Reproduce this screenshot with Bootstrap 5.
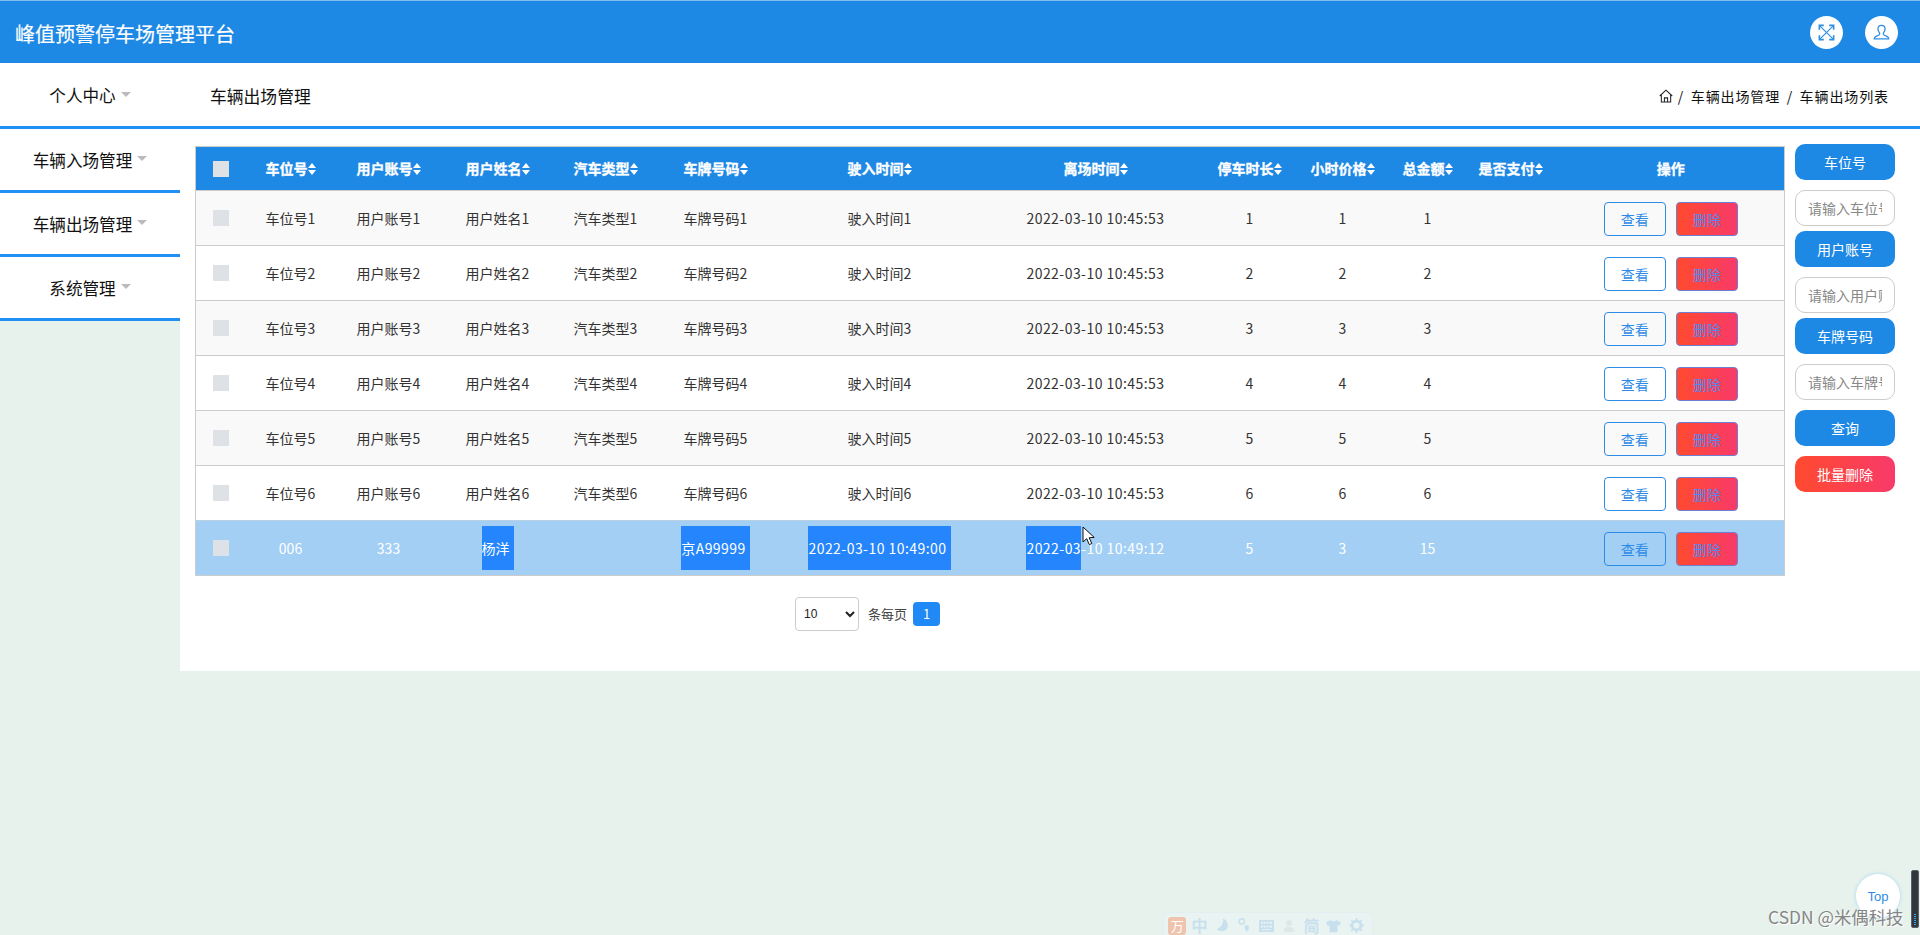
<!DOCTYPE html>
<html lang="zh-CN">
<head>
<meta charset="utf-8">
<title>峰值预警停车场管理平台</title>
<link href="https://cdn.jsdelivr.net/npm/bootstrap@5.3.0/dist/css/bootstrap.min.css" rel="stylesheet">
<style>
html,body{height:935px;overflow:hidden}
body{background:#e8f2ed;font-family:"Noto Sans CJK SC","Liberation Sans",sans-serif;font-size:14px;color:#333;position:relative}
.topbar{height:63px;background:#1e88e5;border-top:1px solid #7fbcf0;padding:0 22px 0 15px}
.brand-name{font-size:20px;color:#fff;line-height:1;padding-top:3px;-webkit-text-stroke:.2px #fff}
.round-ico{width:33px;height:33px;border-radius:50%;background:#fff;color:#2f8fe3}
.subbar{height:66px;background:#fff;border-bottom:3px solid #2190f5;padding-top:3px}
.menu-slot{width:180px}
.menu-text{font-size:16.6px;color:#111;line-height:1}
.menu-caret{display:inline-block;border:5px solid transparent;border-top:5px solid #bbb;border-bottom:0;margin-left:5px;vertical-align:5px}
.page-title{font-size:16.8px;color:#111;padding-left:30px;line-height:1}
.crumbs{font-size:14px;letter-spacing:.9px;word-spacing:2.500px;color:#111;padding-right:31px;white-space:pre}
.layout{align-items:flex-start}
.sideitem{height:64px;width:180px;background:#fff;border-bottom:3px solid #2190f5;padding-top:2px}
.sideitem .menu-caret{margin-bottom:5px;vertical-align:baseline}
.panel{background:#fff;height:542px;padding:17px 0 0 15px;gap:11px}
.grid-wrap{width:1589px}
.data-grid{table-layout:fixed;width:1589px;margin:0;border-collapse:collapse;border:1px solid #ccc;--bs-table-bg:transparent}
.data-grid th{height:44px;background:#1e88e5;color:#fff;font-size:14px;font-weight:700;text-align:center;vertical-align:middle;padding:0;border:0;white-space:nowrap;-webkit-text-stroke:.3px #fff}
.data-grid td{height:55px;text-align:center;vertical-align:middle;padding:0;border:0;border-top:1px solid #ccc;color:#333;white-space:nowrap;line-height:44px}
.data-grid tr.alt td{background:#f9f9f9}
.data-grid tr.plain td{background:#fff}
.data-grid tr.picked td{background:#a3cff5;color:#fff;border-top-color:#b9cfe2}
.tick{display:block;width:16px;height:16px;background:#dee2e6;margin:0 auto}
.sort-ico{width:8px;height:12px;vertical-align:-1px}
.when{letter-spacing:.46px}
.sel{display:inline-block;background:#2485fd;line-height:44px;height:44px;color:#fff;padding-right:4px}
.sel-left{display:inline-block;background:#2485fd;line-height:44px;height:44px;color:#fff}
.act-row{gap:10px;padding-top:1px}
.act{width:62px;height:34px;padding:0;font-size:14px;border-radius:4px;line-height:32px;color:#2e8be6;border:1px solid #2e8be6;background:transparent}
.act-del{background:linear-gradient(90deg,#ff4a2e,#f83a6a);color:#5488ee;border-color:#6f7fd0}
.tools{width:100px;margin-top:-2px}
.tool-btn{width:100px;height:36px;padding:0;border:0;border-radius:10px;background:#1e88e5;color:#fff;font-size:14px;line-height:36px}
.tool-del{background:linear-gradient(90deg,#ff4a2e,#f83a6a)}
.tool-input{width:100px;height:36px;border:1px solid #ccc;border-radius:10px;padding:0 12px;font-size:14px;color:#333;background:#fff;font-family:inherit}
.tool-input::placeholder{color:#888;opacity:1}
.gap-s{margin-top:5px}.gap-l{margin-top:10px}
.pager{height:34px;margin-top:21px;padding-left:600px;gap:9px}
.size-pick{width:64px;height:34px;font-size:12px;border:1px solid #ccc;border-radius:4px;padding:0 0 0 4px;background:#fff;color:#222;font-family:"Liberation Sans",sans-serif}
.pager-text{font-size:13px;color:#444}
.page-no{width:27px;height:24px;background:#2189f5;color:#fff;border-radius:4px;font-size:13px;line-height:24px;margin-left:-3px}
.up-btn{position:absolute;left:1856px;top:874px;width:44px;height:44px;border-radius:50%;background:#fff;box-shadow:0 0 4px #a9d6f2;color:#2e8be6;font-size:13px;line-height:46px;text-align:center;font-family:"Liberation Sans",sans-serif}
.mark-text{position:absolute;left:1768px;top:906px;font-size:17.4px;line-height:22px;color:#858585;text-shadow:1px 1px 0 #fff;white-space:nowrap}
.edge-strip{position:absolute;left:1911px;top:870px;width:8px;height:58px;background:#31373d;border:1px solid #5a6068;border-radius:2px}
.edge-dots{position:absolute;left:2px;bottom:2px;width:2px;height:11px;background:repeating-linear-gradient(#35a4e8 0 1px,transparent 1px 2px)}
.ime{position:absolute;left:1163px;top:912px;width:210px;height:23px;border:1px solid #e2eef0;border-bottom:0;border-radius:6px 6px 0 0;background:#e9f3f1;padding:4px 0 0 2px;color:#c7e0ee;font-size:16px;line-height:1}
.ime-cell{width:22.4px;flex:none;text-align:center;display:flex;justify-content:center;align-items:center;-webkit-text-stroke:.4px #c7e0ee}
.ime-logo{width:18px;height:18px;border-radius:3px;background:#efc4ad;color:#fff;font-size:13px;line-height:18px;-webkit-text-stroke:0}
.cursor-mark{position:absolute;left:1082px;top:526px;width:13px;height:20px}
</style>
</head>
<body>

<header class="topbar d-flex align-items-center justify-content-between">
  <div class="brand-name">峰值预警停车场管理平台</div>
  <div class="d-flex" style="gap:22px">
    <div class="round-ico d-flex align-items-center justify-content-center">
      <svg width="17" height="17" viewBox="0 0 19 19" fill="none" stroke="currentColor" stroke-width="1.300"><path d="M2 2l15 15M17 2L2 17"/><path d="M1.500 6.500v-5h5M12.500 1.500h5v5M17.500 12.500v5h-5M6.500 17.500h-5v-5" stroke-width="1.800"/></svg>
    </div>
    <div class="round-ico d-flex align-items-center justify-content-center">
      <svg width="17" height="17" viewBox="0 0 20 20" fill="none" stroke="currentColor" stroke-width="1.500"><path d="M10 1.500c2.700 0 4.200 2 4.200 4.500 0 2-1 3.600-2 4.600v1.600c0 .8 1 1.100 3 1.800 2 .7 3.300 1.600 3.300 3.500H1.500c0-1.900 1.300-2.800 3.300-3.500 2-.7 3-1 3-1.800v-1.600c-1-1-2-2.600-2-4.600 0-2.500 1.500-4.500 4.200-4.500z"/></svg>
    </div>
  </div>
</header>

<div class="subbar d-flex align-items-center">
  <div class="menu-slot text-center"><span class="menu-text">个人中心</span><span class="menu-caret"></span></div>
  <div class="page-title flex-grow-1">车辆出场管理</div>
  <div class="crumbs d-flex align-items-center">
    <svg width="14" height="14" viewBox="0 0 15 15" fill="none" stroke="#222" stroke-width="1.100" style="margin-right:5px"><path d="M.8 7.500L7.500 1.300l6.700 6.200M2.500 6.500v7.500h10V6.500"/><path d="M5.800 14V9.500h3.400V14"/></svg>
    <span>/ 车辆出场管理 / 车辆出场列表</span>
  </div>
</div>

<div class="d-flex layout">
  <nav>
    <div class="sideitem d-flex align-items-center justify-content-center"><span class="menu-text">车辆入场管理</span><span class="menu-caret"></span></div>
    <div class="sideitem d-flex align-items-center justify-content-center"><span class="menu-text">车辆出场管理</span><span class="menu-caret"></span></div>
    <div class="sideitem d-flex align-items-center justify-content-center"><span class="menu-text">系统管理</span><span class="menu-caret"></span></div>
  </nav>
  <main class="panel flex-grow-1 d-flex align-items-start">
    <div class="grid-wrap">
      <table class="table data-grid">
        <colgroup><col style="width:50px"><col style="width:90px"><col style="width:106px"><col style="width:112px"><col style="width:104px"><col style="width:116px"><col style="width:212px"><col style="width:220px"><col style="width:88px"><col style="width:98px"><col style="width:72px"><col style="width:94px"><col style="width:227px"></colgroup>
        <thead>
          <tr id="head-row"></tr>
        </thead>
        <tbody id="rows"></tbody>
      </table>
      <div class="pager d-flex align-items-center">
        <select class="size-pick"><option>10</option><option>20</option><option>30</option></select>
        <span class="pager-text">条每页</span>
        <span class="page-no text-center">1</span>
      </div>
    </div>
    <aside class="tools d-flex flex-column">
      <button class="tool-btn">车位号</button>
      <input class="tool-input gap-l" placeholder="请输入车位号">
      <button class="tool-btn gap-s">用户账号</button>
      <input class="tool-input gap-l" placeholder="请输入用户账号">
      <button class="tool-btn gap-s">车牌号码</button>
      <input class="tool-input gap-l" placeholder="请输入车牌号码">
      <button class="tool-btn gap-l">查询</button>
      <button class="tool-btn tool-del gap-l">批量删除</button>
    </aside>
  </main>
</div>

<svg class="cursor-mark" viewBox="0 0 13 20"><path d="M1 1v15l3.700-3.400 2.600 6 2.500-1.100-2.600-5.800 5-.3z" fill="#fff" stroke="#111" stroke-width="1"/></svg>

<div class="ime d-flex align-items-start">
  <span class="ime-cell"><span class="ime-logo">万</span></span>
  <span class="ime-cell">中</span>
  <span class="ime-cell"><svg width="14" height="17" viewBox="0 0 16 18" fill="currentColor"><path d="M9 1c1 5-1 10-7 12 2 3 9 4 12-1 2-4-1-10-5-11z"/></svg></span>
  <span class="ime-cell"><svg width="13" height="16" viewBox="0 0 14 18" fill="currentColor"><circle cx="4" cy="5" r="3" fill="none" stroke="currentColor" stroke-width="1.600"/><path d="M9 9a3 3 0 0 1 3 3c0 2-1 4-4 5 1-2 1-3 0-3a3 3 0 0 1 1-5z"/></svg></span>
  <span class="ime-cell"><svg width="15" height="14" viewBox="0 0 16 15" fill="currentColor" style="margin-top:2px"><path d="M0 1h16v13H0zm2 2v2h2V3zm3 0v2h2V3zm3 0v2h2V3zm3 0v2h3V3zM2 7v2h2V7zm3 0v2h2V7zm3 0v2h2V7zm3 0v2h3V7zM3 11v1h10v-1z" fill-rule="evenodd"/></svg></span>
  <span class="ime-cell"><svg width="12" height="14" viewBox="0 0 16 18" fill="#dce9e7" style="margin-top:2px"><circle cx="8" cy="5" r="4"/><path d="M1 17c0-5 3-7 7-7s7 2 7 7z"/></svg></span>
  <span class="ime-cell">简</span>
  <span class="ime-cell"><svg width="15" height="14" viewBox="0 0 17 16" fill="currentColor" style="margin-top:2px"><path d="M5 1L0 4l2 4 2-1v8h9V7l2 1 2-4-5-3c-1 2-6 2-7 0z"/></svg></span>
  <span class="ime-cell"><svg width="15" height="15" viewBox="0 0 17 17" fill="none" stroke="currentColor" stroke-width="3" style="margin-top:1px"><circle cx="8.500" cy="8.500" r="5"/><path d="M8.500 0v3M8.500 14v3M0 8.500h3M14 8.500h3M2.500 2.500l2 2M12.500 12.500l2 2M14.500 2.500l-2 2M4.500 12.500l-2 2" stroke-width="2"/></svg></span>
</div>

<div class="up-btn">Top</div>
<div class="mark-text">CSDN @米偶科技</div>
<div class="edge-strip"><span class="edge-dots"></span></div>

<script src="https://cdn.jsdelivr.net/npm/bootstrap@5.3.0/dist/js/bootstrap.bundle.min.js"></script>
<script>
const sortIco='<svg class="sort-ico" viewBox="0 0 8 12" fill="#fff"><path d="M4 0l4 5H0zM4 12L0 7h8z"/></svg>';
const heads=['车位号','用户账号','用户姓名','汽车类型','车牌号码','驶入时间','离场时间','停车时长','小时价格','总金额','是否支付'];
document.getElementById('head-row').innerHTML='<th><span class="tick"></span></th>'+heads.map(h=>'<th>'+h+sortIco+'</th>').join('')+'<th>操作</th>';
const acts='<td><div class="d-flex justify-content-center act-row"><button class="act">查看</button><button class="act act-del">删除</button></div></td>';
let html='';
for(let i=1;i<=6;i++){
  html+='<tr class="'+(i%2?'alt':'plain')+'"><td><span class="tick"></span></td>'+
  ['车位号','用户账号','用户姓名','汽车类型','车牌号码','驶入时间'].map(t=>'<td>'+t+i+'</td>').join('')+
  '<td class="when">2022-03-10 10:45:53</td><td>'+i+'</td><td>'+i+'</td><td>'+i+'</td><td></td>'+acts+'</tr>';
}
html+='<tr class="picked"><td><span class="tick"></span></td><td>006</td><td>333</td><td><span class="sel">杨洋</span></td><td></td><td><span class="sel when">京A99999</span></td><td><span class="sel when">2022-03-10 10:49:00</span></td><td class="when"><span class="sel-left">2022-03</span>-10 10:49:12</td><td>5</td><td>3</td><td>15</td><td></td>'+acts+'</tr>';
document.getElementById('rows').innerHTML=html;
</script>
</body>
</html>
